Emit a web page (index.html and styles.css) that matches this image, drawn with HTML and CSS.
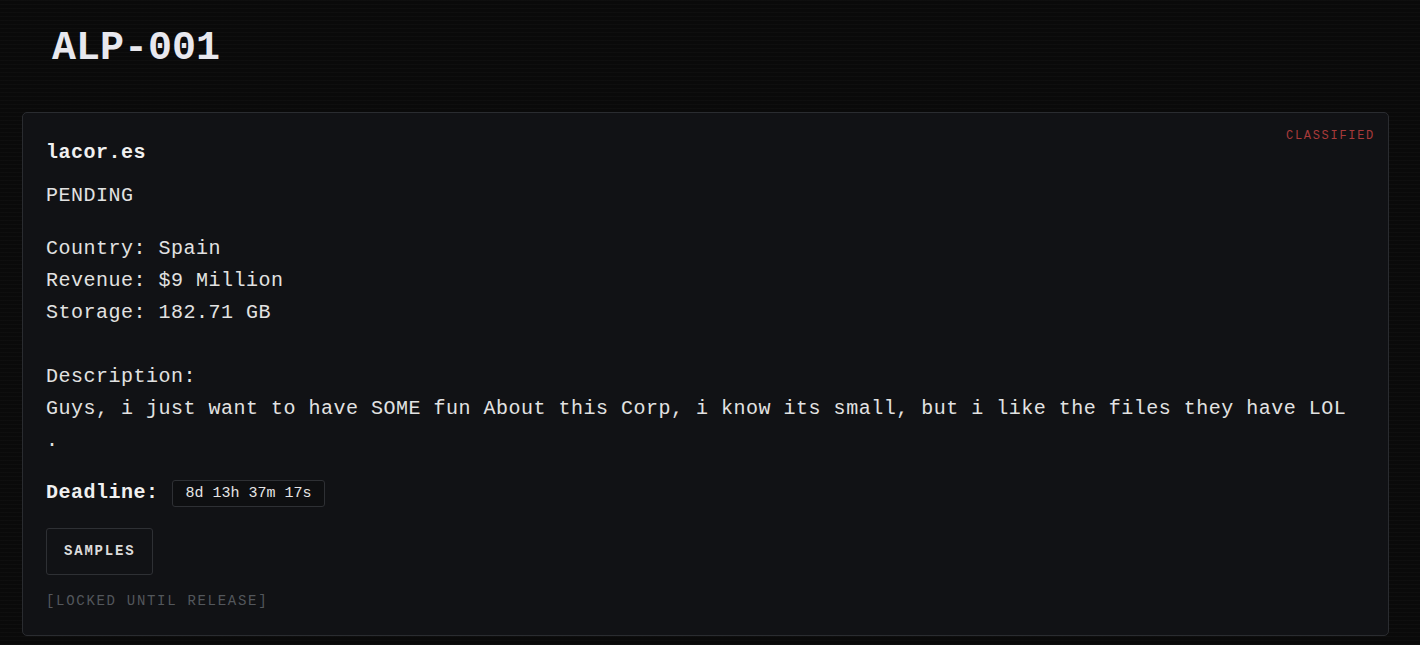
FILE: index.html
```html
<!DOCTYPE html>
<html lang="en">
<head>
<meta charset="utf-8">
<title>ALP-001</title>
<link rel="stylesheet" href="styles.css">
</head>
<body>
<div class="page">
  <header class="header">
    <h1 class="title">ALP-001</h1>
  </header>
  <section class="card">
    <span class="stamp">CLASSIFIED</span>
    <h2 class="domain">lacor.es</h2>
    <p class="status">PENDING</p>
    <div class="info">
      <div class="line">Country: Spain</div>
      <div class="line">Revenue: $9 Million</div>
      <div class="line">Storage: 182.71 GB</div>
    </div>
    <div class="desc">
      <div class="line">Description:</div>
      <div class="line">Guys, i just want to have SOME fun About this Corp, i know its small, but i like the files they have LOL .</div>
    </div>
    <div class="deadline">
      <span class="deadline-label">Deadline:</span>
      <span class="timer">8d 13h 37m 17s</span>
    </div>
    <button class="samples">SAMPLES</button>
    <p class="locked">[LOCKED UNTIL RELEASE]</p>
  </section>
</div>
</body>
</html>
```

FILE: styles.css
```css
html, body {
  margin: 0;
  padding: 0;
}

body {
  background-color: #0a0a0a;
  background-image: repeating-linear-gradient(
    to bottom,
    rgba(255, 255, 255, 0.018) 0px,
    rgba(255, 255, 255, 0.018) 1px,
    transparent 1px,
    transparent 4px
  );
  color: #e2e2e2;
  font-family: "Courier New", "Liberation Mono", monospace;
  min-height: 645px;
}

.page {
  padding: 25px 31px 0 22px;
}

.header {
  padding-left: 30px;
  margin-bottom: 39px;
}

.title {
  margin: 0;
  font-size: 40px;
  line-height: 48px;
  font-weight: bold;
  color: #e8e8ee;
}

.card {
  position: relative;
  background: #111215;
  border: 1px solid #2a2c30;
  border-radius: 5px;
  padding: 24px 24px 25px 23px;
  font-size: 20px;
  letter-spacing: 0.5px;
  line-height: 32px;
}

.stamp {
  position: absolute;
  top: 16px;
  right: 13px;
  font-size: 12px;
  line-height: 14px;
  letter-spacing: 1.7px;
  color: #a83a3a;
}

.domain {
  margin: 0 0 11px;
  font-size: 20px;
  line-height: 32px;
  font-weight: bold;
  color: #f0f0f0;
}

.status {
  margin: 0 0 21px;
}

.desc {
  margin-top: 32px;
}

.deadline {
  display: flex;
  align-items: center;
  gap: 13px;
  margin-top: 20px;
}

.deadline-label {
  font-weight: bold;
  color: #f0f0f0;
}

.timer {
  display: block;
  font-size: 15px;
  line-height: 19px;
  letter-spacing: 0;
  padding: 3px 12px 3px 13px;
  border: 1px solid #2e3034;
  border-radius: 3px;
  background: #0e0f11;
  color: #e6e6e6;
}

.samples {
  display: block;
  margin-top: 19px;
  padding: 14px 17px;
  font-family: inherit;
  font-size: 14px;
  line-height: 17px;
  font-weight: bold;
  letter-spacing: 1.8px;
  color: #dcdcdc;
  background: #111215;
  border: 1px solid #2e3034;
  border-radius: 3px;
}

.locked {
  margin: 18px 0 0;
  font-size: 14px;
  line-height: 17px;
  letter-spacing: 1.7px;
  color: #53575c;
}
```
